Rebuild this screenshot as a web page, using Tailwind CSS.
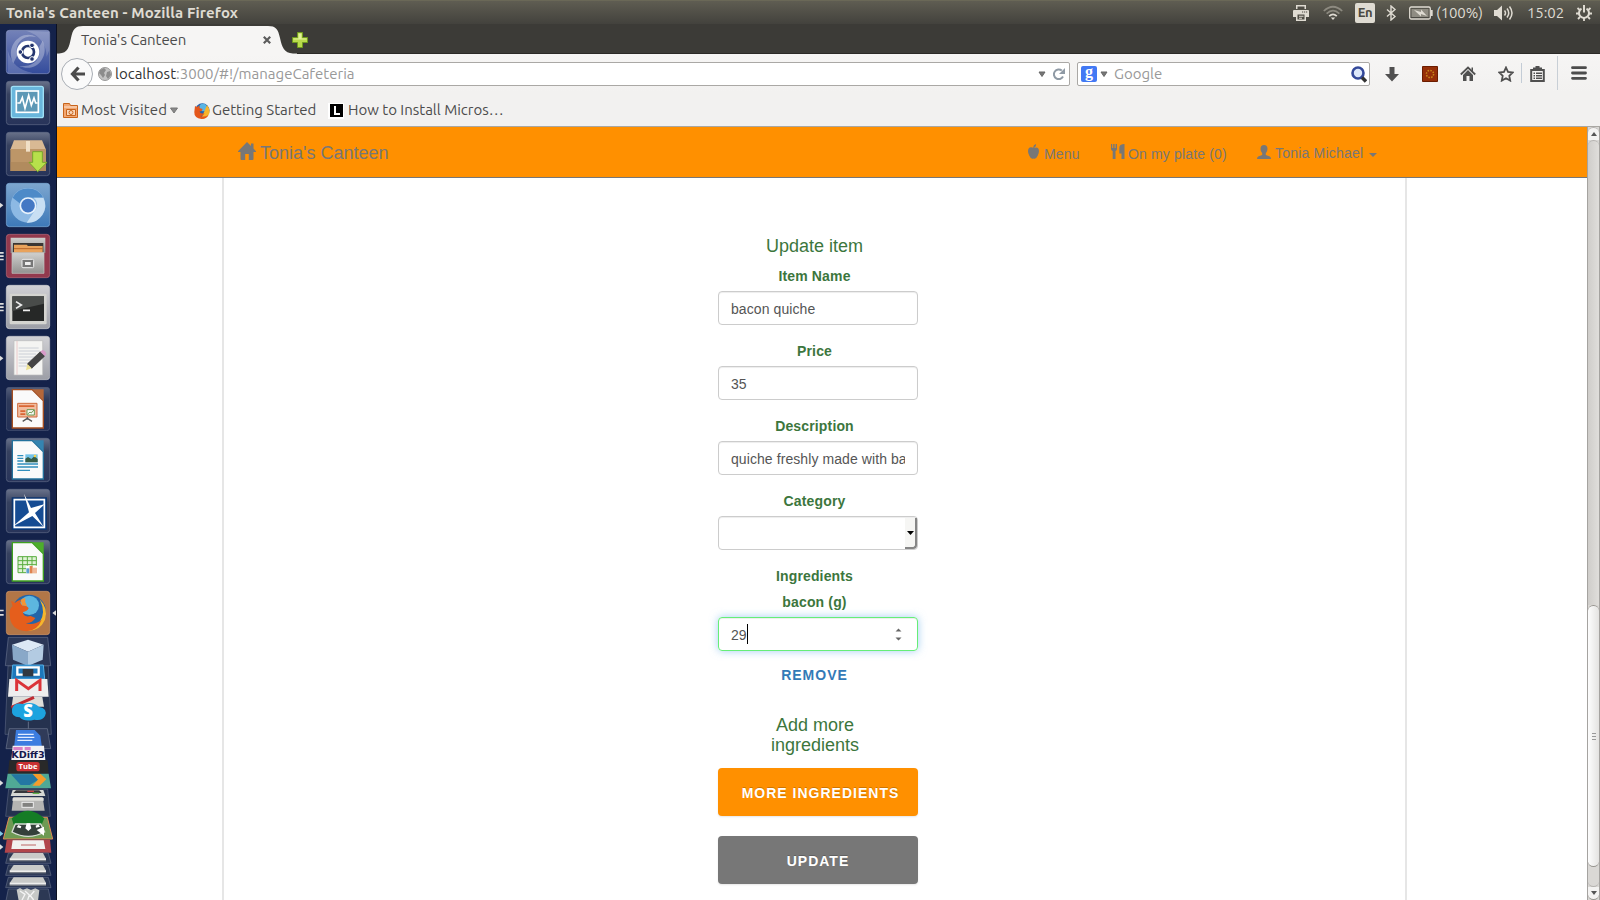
<!DOCTYPE html>
<html lang="en">
<head>
<meta charset="utf-8">
<title>Tonia's Canteen</title>
<script src="https://cdn.jsdelivr.net/npm/@tailwindcss/browser@4"></script>
</head>
<body class="w-[1600px] h-[900px] overflow-hidden flex flex-col bg-white font-['Ubuntu','Open_Sans',sans-serif]">

<!-- System panel -->
<header class="h-6 shrink-0 flex items-center bg-linear-to-b from-[#5f5d52] to-[#43423d] border-t border-[#6a6857] text-[#dfdbd2] text-[15px] leading-none">
  <h1 class="ml-[6px] w-[1287px] font-bold text-[15px] tracking-[0.120px] whitespace-nowrap">Tonia's Canteen - Mozilla Firefox</h1>
  <svg class="w-4 h-4" viewBox="0 0 16 16"><path fill="#dfdbd2" d="M3 0h10v4H3zM1 5h14q1 0 1 1v6h-3v4H3v-4H0V6q0-1 1-1z"/><path fill="#4f4d45" d="M4.500 1.500h7V4h-7zM4.500 9.500h7v5h-7zM9 6.500h1.200v1H9zM11 6.500h1.200v1H11zM13 6.500h1.200v1H13z"/><path fill="#dfdbd2" d="M6 10.800h4.500v1H6zM6 12.800h3v1H6z"/></svg>
  <svg class="ml-[14px] w-5 h-4" viewBox="0 0 20 16" fill="none" stroke-width="1.700"><path stroke="#8d8a80" d="M.8 6Q10-2.500 19.200 6M3.600 8.600Q10 2.600 16.400 8.600"/><path stroke="#dfdbd2" d="M6.200 11.200Q10 7.600 13.800 11.200"/><path fill="#dfdbd2" d="M7.800 12.500h4.400L10 15z"/></svg>
  <span class="ml-3 w-5 h-5 rounded-xs bg-[#dfdbd2] text-[#4a4840] text-[13px] font-semibold flex items-center justify-center tracking-tight">En</span>
  <svg class="ml-[10px] w-3 h-4" viewBox="0 0 12 16" fill="none" stroke="#dfdbd2" stroke-width="1.400"><path d="M2 4.500l8 7L6 15V1l4 3.500-8 7"/></svg>
  <svg class="ml-[12px] w-6 h-[14px]" viewBox="0 0 24 14"><rect x=".7" y="1" width="20.600" height="12" rx="1.500" fill="none" stroke="#dfdbd2" stroke-width="1.300"/><rect x="2.500" y="3" width="17" height="8" fill="#8f8c82"/><path fill="#dfdbd2" d="M22 4h1.700v6H22zM5 4l7 2 0-2.500 6 6.500-6-2v2.500z"/></svg>
  <span class="ml-[3px] w-[48px] tracking-[-0.100px] whitespace-nowrap">(100%)</span>
  <svg class="ml-[10px] w-5 h-4" viewBox="0 0 20 16"><path fill="#dfdbd2" d="M0 5h3l5-4.500v15L3 11H0z"/><path fill="none" stroke="#dfdbd2" stroke-width="1.500" d="M10.500 5.500q2 2.500 0 5M13 3.500q3.500 4.500 0 9M15.500 1.500q5 6.500 0 13"/></svg>
  <span class="ml-[13px] w-[36px] tracking-[-0.100px]">15:02</span>
  <svg class="ml-[13px] w-4 h-4" viewBox="0 0 16 16" fill="none" stroke="#dfdbd2"><path stroke-width="2" d="M5.500 3.600a5 5 0 1 0 5 0M8 0v7.500"/><path stroke-width="1.800" d="M3.700 5L1.500 3M3 8.500H0M4 12l-2 2M8 13v3M12 12l2 2M13 8.500h3M12.300 5l2.200-2"/></svg>
</header>

<div class="flex grow min-h-0">
<!-- Launcher -->
<aside class="w-[57px] shrink-0 bg-[#14224a] border-r border-[#0b1022] flex flex-col">
  <div class="flex flex-col gap-[7px] pt-[6px] pl-[6px] [&>svg]:w-11 [&>svg]:h-11 [&>svg]:shrink-0 [&>svg]:overflow-visible">
    <svg viewBox="0 0 132 132"><defs>
      <linearGradient id="dark" x2="0" y2="1"><stop stop-color="#69728a"/><stop offset=".3" stop-color="#36415f"/><stop offset="1" stop-color="#28345a"/></linearGradient>
      <linearGradient id="grey" x2="0" y2="1"><stop stop-color="#d0d0d4"/><stop offset="1" stop-color="#9c9ea6"/></linearGradient>
      <linearGradient id="blue" x2="0" y2="1"><stop stop-color="#7da6cf"/><stop offset="1" stop-color="#3d79b8"/></linearGradient>
      <linearGradient id="purp" x2="0" y2="1"><stop stop-color="#7482b8"/><stop offset="1" stop-color="#344c9c"/></linearGradient>
      <linearGradient id="cab" x2="0" y2="1"><stop stop-color="#d0d0ce"/><stop offset="1" stop-color="#929290"/></linearGradient></defs>
      <rect x="1" y="1" width="130" height="130" rx="9" fill="url(#purp)" stroke="#8a95c2" stroke-width="2"/>
      <path fill="#fff" opacity=".3" d="M22 100C-5 45 50-5 92 22 55 10 22 40 34 76zM110 32C132 78 92 130 40 108 82 112 108 86 100 50z"/>
      <path fill="#fff" opacity=".18" d="M5 60Q20 120 80 128L50 131H5zM60 2Q120 20 122 80L130 60V5z"/>
      <circle cx="66" cy="66" r="34" fill="#fff"/><circle cx="66" cy="66" r="18" fill="none" stroke="#25366f" stroke-width="8"/>
      <g stroke="#fff" stroke-width="3" fill="#25366f"><circle cx="43" cy="66" r="7"/><circle cx="78" cy="46" r="7"/><circle cx="78" cy="87" r="7"/></g></svg>
    <svg viewBox="0 0 132 132"><rect x="1" y="1" width="130" height="130" rx="9" fill="url(#dark)" stroke="#616b86" stroke-width="2"/><rect x="16" y="16" width="96" height="94" rx="6" fill="#69b6dc" stroke="#9fe0f5" stroke-width="4"/><rect x="31" y="30" width="66" height="64" fill="#5d98b6" stroke="#fff" stroke-width="5"/><path fill="none" stroke="#fff" stroke-width="5" d="M34 66h8l7-16 8 32 11-39 8 30 8-22 5 15h6"/></svg>
    <svg viewBox="0 0 132 132"><rect x="1" y="1" width="130" height="130" rx="9" fill="url(#dark)" stroke="#616b86" stroke-width="2"/><path fill="#d8b994" d="M24 25h84l12 28H13z"/><path fill="#bd9668" d="M13 51h107v66H13z"/><path fill="#a67f54" d="M13 90h107v27H13z" opacity=".5"/><path fill="#f0dfc6" d="M60 27h12v32H60z"/><path fill="#b7e04b" stroke="#78a62b" stroke-width="3" d="M80 59h29v32h14l-28 28-26-28h11z"/></svg>
    <svg viewBox="0 0 132 132"><path fill="#ddd" d="M-18 59l10 8-10 8z"/><rect x="1" y="1" width="130" height="130" rx="9" fill="url(#blue)" stroke="#7faedb" stroke-width="2"/><circle cx="66" cy="67" r="52" fill="#8db9e4"/><path fill="#4d8ac8" d="M20 44a52 52 0 0 1 92 0H66a25 25 0 0 0-25 17z"/><path fill="#c8dff3" d="M112 44a52 52 0 0 1-50 75l28-42a25 25 0 0 0-7-33z"/><circle cx="66" cy="68" r="23" fill="#4478c4" stroke="#e8f2fc" stroke-width="5"/></svg>
    <svg viewBox="0 0 132 132"><path fill="#ddd" d="M-18 54h11v5h-11zM-18 64h11v5h-11zM-18 74h11v5h-11z"/><rect x="1" y="1" width="130" height="130" rx="9" fill="#93394d" stroke="#b76b7a" stroke-width="2"/><path fill="url(#cab)" d="M14 11h104v46H14z"/><path fill="#3b3633" d="M21 27h91v28H21z"/><path fill="#e9a35c" d="M24 32h38l4 4h44v20H24z"/><path stroke="#b8652b" stroke-width="3" d="M24 44h86"/><path fill="url(#cab)" stroke="#c4c4c2" stroke-width="2" d="M18 56h96v62H18z"/><rect x="48" y="76" width="35" height="25" rx="3" fill="#777" stroke="#eee" stroke-width="3"/><path fill="#eee" d="M57 84h17v9H57z"/></svg>
    <svg viewBox="0 0 132 132"><path fill="#ddd" d="M-18 54h11v5h-11zM-18 64h11v5h-11zM-18 74h11v5h-11z"/><rect x="1" y="1" width="130" height="130" rx="9" fill="url(#grey)" stroke="#d5d5d8" stroke-width="2"/><rect x="11" y="26" width="111" height="92" rx="4" fill="#d4d4d0"/><rect x="19" y="34" width="95" height="74" fill="#262827"/><path fill="#494c4a" d="M19 34h95v22L19 78z"/><path fill="none" stroke="#eee" stroke-width="5" d="M30 50l16 10-16 10M51 76h21"/></svg>
    <svg viewBox="0 0 132 132"><path fill="#ddd" d="M-18 59l10 8-10 8z"/><rect x="1" y="1" width="130" height="130" rx="9" fill="url(#grey)" stroke="#c6c6cc" stroke-width="2"/><path fill="#f4f4f2" stroke="#bbb" stroke-width="2" d="M24 14h86v103H24z"/><path stroke="#b9bfc8" stroke-width="2" d="M38 36h60M38 45h63M38 54h52M38 63h60M38 72h45M38 81h32M38 90h25"/><path stroke="#e9b8b8" stroke-width="2" d="M33 15v101"/><path fill="#444" stroke="#252525" stroke-width="2" d="M64 84l39-37 13 13-39 37z"/><path fill="#d79ac8" d="M103 47l6-5q11 2 12 13l-5 5z"/><path fill="#ece091" d="M64 84l13 13-17 6z"/></svg>
    <svg viewBox="0 0 132 132"><rect x="1" y="1" width="130" height="130" rx="9" fill="url(#dark)" opacity=".75" stroke="#616b86" stroke-width="2"/><path fill="#fafafa" stroke="#a54e20" stroke-width="4" d="M19 8h60l33 33v82H19z"/><path fill="#b5673a" d="M79 7h34v34z"/><path fill="#f1bda0" stroke="#cf6b3c" stroke-width="3" d="M35 49h58v41H35z"/><path fill="#d96634" d="M39 55h46v5H39zM43 70h15v5H43zM43 79h15v5H43z"/><path fill="#fff" stroke="#6a9b53" stroke-width="3" d="M63 68h22v16H63zM65 81l7-6 4 3 8-9"/><path fill="none" stroke="#555" stroke-width="4" d="M64 90v8M50 103l14-9 14 9"/></svg>
    <svg viewBox="0 0 132 132"><rect x="1" y="1" width="130" height="130" rx="9" fill="url(#dark)" stroke="#616b86" stroke-width="2"/><path fill="#fafafa" stroke="#23719c" stroke-width="4" d="M19 8h60l33 33v82H19z"/><path fill="#3484b0" d="M79 7h34v34z"/><path stroke="#318fbd" stroke-width="4" d="M34 53h18M34 61h18M34 69h18M34 78h62M34 87h62M34 97h38"/><path fill="#73c2e8" d="M58 49h37v24H58z"/><path fill="#365c46" d="M58 73V62l8-5 10 6 9-8 10 8v10z"/><circle cx="87" cy="54" r="4" fill="#f5d24a"/></svg>
    <svg viewBox="0 0 132 132"><rect x="1" y="1" width="130" height="130" rx="9" fill="url(#dark)" stroke="#616b86" stroke-width="2"/><path fill="#164c93" stroke="#0c356f" stroke-width="4" d="M19 27h102v94H19z"/><path fill="none" stroke="#fff" stroke-width="5" d="M25 32h90v83H25z"/><path fill="#fff" d="M54 14l21 43L117 45 87 72l26 42-34-33-58 31 48-42z"/></svg>
    <svg viewBox="0 0 132 132"><rect x="1" y="1" width="130" height="130" rx="9" fill="url(#dark)" stroke="#616b86" stroke-width="2"/><path fill="#fafafa" stroke="#3fa01f" stroke-width="4" d="M19 8h60l33 33v82H19z"/><path fill="#4dad2b" d="M79 7h34v34z"/><path fill="#dff2d6" stroke="#58ad3e" stroke-width="3" d="M36 50h55v48H36zM36 62h55M36 74h55M36 86h55M50 50v48M64 50v48M78 50v48"/><path fill="#fff" d="M60 77h37v24H60z"/><path fill="#5d9fcf" d="M61 85h9v15h-9z"/><path fill="#df8350" d="M71 78h9v22h-9z"/><path fill="#f0b99a" d="M81 83h12v17H81z"/></svg>
    <svg viewBox="0 0 132 132"><path fill="#ddd" d="M-18 56h11v5h-11zM-18 69h11v5h-11zM150 58v16l-11-8z"/><rect x="1" y="1" width="130" height="130" rx="9" fill="#b27647" stroke="#d39a6b" stroke-width="2"/><circle cx="69" cy="62" r="51" fill="#2465a8"/><circle cx="70" cy="43" r="29" fill="#5db6df"/><path fill="#f6b52c" d="M101 25q27 28 16 61-15 34-53 34l37-26q20-30 0-69z"/><path fill="#e55e1c" d="M15 30q7 1 11 6 10-9 18-10-3 9 4 17 15 0 20 9-5 10-17 11 1 17 23 12l14 6q-10 17-29 15 22 9 48-9-13 32-45 34Q13 118 11 72q-1-21 9-26z"/><path fill="#f49534" d="M44 26q8-4 14-4-3 11 5 22-7 1-15-1z"/></svg>
  </div>
  <svg class="w-[57px] h-[264px] shrink-0 mt-px" viewBox="0 18 171 792">
    <path fill="#2b3757" stroke="#65708c" stroke-width="2" d="M25 22h118l9 85H16z"/>
    <path fill="#dce8f5" d="M84 29l47 15-47 21-48-21z"/><path fill="#89a8c8" d="M36 44l48 21v43L39 89z"/><path fill="#b3cbe2" d="M131 44L84 65v43l44-19z"/>
    <path fill="#25324f" stroke="#56617d" stroke-width="2" d="M24 108h121l9 205H15z"/>
    <path fill="#1e78bb" stroke="#54afe6" stroke-width="3" d="M38 105h92l4 42H35z"/><path fill="none" stroke="#fff" stroke-width="7" d="M52 112h64v22H52z"/><path fill="#303842" d="M68 117h32v22H68z"/>
    <path fill="#eee" d="M28 147h114l4 53H24z"/><path fill="none" stroke="#db3439" stroke-width="9" d="M50 183v-32l35 25 35-25v32"/>
    <path fill="#deded9" d="M39 201h88l5 29H35z"/><path stroke="#bf2b31" stroke-width="9" d="M34 232l68-30"/>
    <path fill="#1da3df" d="M36 237q6-22 33-15 31-9 48 9 27 4 18 27-9 16-32 11-30 8-44-7-26 0-23-25z"/><text x="84" y="262" text-anchor="middle" font-family="Open Sans" font-weight="800" font-size="50" fill="#fff">S</text>
    <path stroke="#828da4" stroke-width="2" d="M85 275v30"/>
    <path fill="#303b59" stroke="#6e7890" stroke-width="2" d="M28 296h114l10 60H18z"/>
    <path fill="#3c7de0" d="M48 300h56l17 17 5 36H42z"/><path stroke="#e2edff" stroke-width="4" d="M54 313h47M53 322h50M52 331h45"/>
    <path fill="#f2f2f3" d="M38 347h94l4 43H34z"/><path fill="#d982c6" d="M40 351h28v10H40zM74 351h18v10H74z"/><text x="84" y="384" text-anchor="middle" font-family="DejaVu Sans" font-weight="bold" font-size="25" textLength="100" lengthAdjust="spacingAndGlyphs" fill="#15174d">KDiff3</text>
    <path fill="#292929" d="M28 391h115l3 40H24z"/><rect x="49" y="396" width="70" height="28" rx="8" fill="#c83033"/><text x="84" y="417" text-anchor="middle" font-family="Open Sans" font-weight="bold" font-size="23" fill="#fff">Tube</text>
    <path fill="#50a995" d="M23 431h123l7 44H16z"/><path fill="#2377a3" d="M33 433h72l10 16-26 16H62z"/><path fill="#f59c2b" d="M98 432h24l17 16-20 19H97l17-18z"/><path fill="#ddd" d="M0 451l10 8-10 8z"/>
    <path fill="#25324f" stroke="#56617d" stroke-width="2" d="M26 477h117l8 82H17z"/>
    <path fill="#d6d8d4" d="M38 480h92l6 18H32z"/><path fill="#35373b" d="M48 481h70l7 8H40z"/><path stroke="#c94141" stroke-width="4" d="M82 484h20"/><path stroke="#65b14b" stroke-width="4" d="M98 490h20"/>
    <path fill="#b4b4b2" d="M40 501h88l6 41H35z"/><path fill="#deded9" d="M38 504h93v8H37z"/><rect x="66" y="517" width="34" height="15" fill="#828280" stroke="#eee" stroke-width="3"/>
    <path fill="#6e9a54" stroke="#df8a54" stroke-width="3" d="M27 562h115l16 65H10z"/><path fill="#157c25" d="M35 565l13-9q35-27 73 0l12 9-8 19H41z"/><path fill="#34403a" stroke="#d5ddd3" stroke-width="4" d="M46 582h76l12 24q-50 26-98 0z"/><path fill="#fff" d="M80 580h10l4 15-9 8-9-8zM55 585l9 4-2 6-12-3zM107 587l8-4 5 7-12 3zM110 600l22-10v27z"/><path fill="#81c9e5" d="M0 603l10 8-10 8z"/>
    <path fill="#b1454b" d="M20 629h130l4 39H14z"/><path fill="#f1f1ef" d="M38 631h93l5 26H34z"/><path stroke="#bd6664" stroke-width="3" d="M63 645h45"/><path fill="#ddd" d="M0 643l10 8-10 8z"/>
    <g id="drive"><path fill="#2c3854" stroke="#626d86" stroke-width="2" d="M25 669h120l8 31H17z"/><path fill="#c9cac8" d="M41 669h88l9 17H29z"/><path fill="#efefed" d="M29 685h109v6H29z"/><path fill="#85878b" d="M29 691h109v3H29z"/></g>
    <use href="#drive" y="36"/><use href="#drive" y="73"/>
    <path fill="#2c3854" stroke="#626d86" stroke-width="2" d="M25 777h120l8 40H17z"/><path fill="#c6c8c6" d="M50 779l10-5 9 5 12-4 12 5 13-5 12 6-4 31H56z"/><path stroke="#f4f4f4" stroke-width="4" fill="none" d="M60 783l15 10-9 17M75 783l13 12-5 15M103 783l-12 14 10 13"/>
  </svg>
</aside>

<div class="flex flex-col grow min-w-0">
  <!-- Tab strip -->
  <div class="h-[30px] shrink-0 bg-[#3c3b37] border-b border-[#2b2a27] relative">
    <svg class="absolute left-0 top-0 w-[240px] h-[31px]" viewBox="0 0 240 31"><path fill="#f6f5f4" d="M0 31V29.500H2C11 29 12 23 14 14 16 5 18 2 26 2H211C219 2 221 5 223 14 225 23 227 29 236 29.500H240V31z"/></svg>
    <div class="relative flex items-center h-full text-[15px] text-[#4c4c4c]">
      <span class="ml-6 w-[180px] tracking-[-0.050px] whitespace-nowrap pt-[3px]">Tonia's Canteen</span>
      <svg class="w-2 h-2 mt-[3px] ml-[2px]" viewBox="0 0 8 8" stroke="#5c5c5c" stroke-width="2.200"><path d="M.8.8l6.400 6.400M7.200.8L.8 7.200"/></svg>
      <svg class="ml-[21px] w-4 h-4 mt-[2px]" viewBox="0 0 16 16"><path fill="#b9d94c" stroke="#6f9a1d" d="M5.500.5h5v5h5v5h-5v5h-5v-5h-5v-5h5z"/><path fill="#e2f29a" d="M6.500 1.500h3v5h5v1h-13v-1h5z"/></svg>
    </div>
  </div>
  <!-- Address and search -->
  <div class="h-[38px] shrink-0 bg-linear-to-b from-[#f6f5f4] to-[#f2f1f0] flex items-center text-[15px] text-[#999]">
    <div class="relative z-10 ml-1 mt-[2px] w-8 h-8 rounded-full border border-[#a9aeb5] bg-[#fafafa] flex items-center justify-center shrink-0"><svg class="w-[15px] h-4" viewBox="0 0 15 16"><path fill="none" stroke="#4c4c4c" stroke-width="3.200" d="M8.500 1.500L2.500 8l6 6.500M3 8h12"/></svg></div>
    <div class="-ml-[9px] mt-[2px] w-[986px] h-6 shrink-0 bg-white border border-[#aaa8a5] rounded-r-xs flex items-center pl-[13px] whitespace-nowrap">
      <svg class="w-[14px] h-[14px]" viewBox="0 0 14 14"><circle cx="7" cy="7" r="6.500" fill="#c4c4c4" stroke="#999"/><path fill="#8c8c8c" d="M2 3l4-2 2 2-2 3 1 2-2 3-2-3-2-2zM9 5l3-1 1 4-3 4-2-3z"/></svg>
      <span class="ml-[3px] w-[926px] pt-px"><span class="text-[#333]">localhost</span>:3000/#!/manageCafeteria</span>
    </div>
    <svg class="-ml-[32px] mt-[3px] w-2 h-[7px] shrink-0" viewBox="0 0 8 7"><path fill="#777" stroke="#666" d="M1 1h6L4 5.500z"/></svg>
    <svg class="ml-[7px] mt-[2px] w-3 h-[14px] shrink-0" viewBox="0 0 12 14"><path fill="none" stroke="#8f9aa5" stroke-width="2" d="M10 9.500A4.800 4.800 0 1 1 8.800 3.600"/><path fill="#8f9aa5" d="M12 1v6H6z"/></svg>
    <div class="ml-[12px] mt-[2px] w-[293px] h-6 shrink-0 bg-white border border-[#aaa8a5] rounded-xs flex items-center">
      <span class="ml-[3px] w-4 h-4 rounded-xs bg-[#4279f4] text-white flex items-center justify-center font-['Liberation_Serif'] font-bold text-[16px] leading-none pb-1">g</span>
      <svg class="ml-[3px] w-2 h-[7px]" viewBox="0 0 8 7"><path fill="#777" stroke="#666" d="M1 1h6L4 5.500z"/></svg>
      <span class="ml-[6px] w-[237px] pt-px">Google</span>
      <svg class="w-4 h-[17px]" viewBox="0 0 16 17"><circle cx="7" cy="7" r="5.500" fill="#dce7fa" stroke="#34499a" stroke-width="2.600"/><path stroke="#333" stroke-width="3.600" d="M11 11.500l4 4"/></svg>
    </div>
    <svg class="ml-[15px] mt-[2px] w-[14px] h-[15px] shrink-0" viewBox="0 0 14 15"><path fill="#505050" d="M4.500 0h5v7H14l-7 7.500L0 7h4.500z"/></svg>
    <svg class="ml-[23px] mt-[2px] w-4 h-4 shrink-0" viewBox="0 0 16 16"><path fill="#962f08" stroke="#6b1c00" d="M.5.5h15v15H.5z"/><circle cx="8" cy="8" r="3.600" fill="none" stroke="#c8851a" stroke-width="1.500" stroke-dasharray="1.600 1.200"/></svg>
    <svg class="ml-[22px] mt-[2px] w-4 h-4 shrink-0" viewBox="0 0 16 16"><path fill="none" stroke="#505050" stroke-width="1.800" d="M.8 8.500L8 1.500l7.200 7"/><path fill="#505050" d="M3 9l5-5 5 5v6H9.500v-5h-3v5H3zM11.500 1.500H13V6l-1.500-1.500z"/></svg>
    <svg class="ml-[22px] mt-[2px] w-4 h-4 shrink-0" viewBox="0 0 16 16"><path fill="none" stroke="#505050" stroke-width="1.800" d="M8 1.500l2 4.400 4.800.6-3.500 3.300.9 4.800L8 12.200l-4.200 2.400.9-4.800L1.200 6.500 6 5.900z"/></svg>
    <span class="ml-[7px] h-5 w-px bg-[#c3ccd6]"></span>
    <svg class="ml-[8px] mt-[1px] w-[15px] h-4 shrink-0" viewBox="0 0 15 16"><path fill="none" stroke="#505050" stroke-width="2" d="M1.200 4h12.600v11H1.200z"/><path fill="#505050" d="M3 1.500h2.500V0h4v1.500H12V5H3zM3.500 6.500H5V8H3.500zM6 6.500h6V8H6zM3.500 9H5v1.500H3.500zM6 9h6v1.500H6zM3.500 11.500H5V13H3.500zM6 11.500h6V13H6z"/></svg>
    <span class="ml-[12px] h-[34px] w-px bg-[#c8cfd6]"></span>
    <svg class="ml-[13px] w-4 h-[14px] shrink-0" viewBox="0 0 16 14"><path stroke="#4c4c4c" stroke-width="2.800" stroke-linecap="round" d="M1.500 1.700h13M1.500 7h13M1.500 12.300h13"/></svg>
  </div>
  <!-- Bookmarks -->
  <div class="h-[35px] shrink-0 bg-[#f2f1f0] border-b border-[#a9a7a3] flex items-center pt-[3px] text-[15px] text-[#4c4c4c] whitespace-nowrap">
    <svg class="ml-[6px] w-[15px] h-[15px]" viewBox="0 0 15 15"><path fill="#f2a772" stroke="#c8641c" d="M.5.5h6l1 2h7v12H.5z"/><path fill="#fff" opacity=".7" d="M1 3.500h13v1H1z"/><path fill="#f9d7bc" stroke="#c8641c" d="M3.500 6.500h9v6h-9z"/><circle cx="8" cy="9.500" r="2" fill="none" stroke="#c8641c"/></svg>
    <span class="ml-[3px] w-[87px] tracking-[0.150px]">Most Visited</span>
    <svg class="ml-[2px] w-2 h-[7px]" viewBox="0 0 8 7"><path fill="#888" stroke="#777" d="M.5 1h7L4 6z"/></svg>
    <svg class="ml-[16px] w-4 h-4" viewBox="0 0 16 16"><circle cx="8.300" cy="7.500" r="7.200" fill="#2463ad"/><circle cx="9" cy="4.500" r="3.700" fill="#58b5e5"/><path fill="#f7b42c" d="M13 2q4 5 2 9-2 5-8 5z"/><path fill="#e4571b" d="M1 3l2 1 2.500-1.500V5l3 1q0 2-3 2.500 1 3 5 1.500-1 3-4 3 4 1.500 8-1-2 4-7 4Q0 15 .3 9z"/></svg>
    <span class="ml-[2px] w-[104px]">Getting Started</span>
    <span class="ml-[12px] w-4 h-4 bg-white flex items-center justify-center"><svg class="w-[13px] h-[13px]" viewBox="0 0 13 13"><path fill="#000" d="M0 0h13v13H0z"/><path fill="none" stroke="#fff" stroke-width="2" d="M5 2v8h5"/></svg></span>
    <span class="ml-[4px]">How to Install Micros…</span>
  </div>

  <!-- Page viewport -->
  <div class="flex grow min-h-0 font-['Liberation_Sans',sans-serif]">
    <main class="w-[1530px] shrink-0 flex flex-col">
      <nav class="h-[51px] shrink-0 bg-[#ff9000] border-b border-[#777] flex items-center text-[#777] text-[14px] whitespace-nowrap">
        <svg class="ml-[181px] -mt-[2px] w-[18px] h-[18px]" viewBox="0 0 18 18"><path fill="#777" d="M9 0l4 4V1.500h2.500v5L18 9.300q.2.700-.5.700h-2v7q0 1-1 1h-3.700v-6H7.200v6H3.500q-1 0-1-1v-7h-2Q-.2 10 0 9.300z"/></svg>
        <span class="ml-1 w-[768px] text-[18px] pt-[3px]">Tonia's Canteen</span>
        <svg class="w-[11px] h-[15px] -mt-[2px]" viewBox="0 0 11 15"><path fill="#777" d="M5.300 3.800Q5 1 8 0q.5 2.500-2 4 3-1.500 4.500.8 1.200 3-.8 7Q8 15.600 5.500 14.500 3 15.600 1.300 11.800-.8 7.800.5 4.800 2 2.500 5.300 3.800z"/></svg>
        <span class="ml-[5px] w-[36px] pt-[5px] tracking-[0.150px]">Menu</span>
        <svg class="ml-[31px] w-[14px] h-[15px] -mt-[2px]" viewBox="0 0 14 15"><path fill="#777" d="M0 0h1.200v4h1V0h1.400v4h1V0H6v5q0 1.500-1.500 2v8H1.700V7Q0 6.500 0 5zM9.500 1Q11 0 13.500 0v15h-3V9.500H8.300V4q0-2 1.200-3z"/></svg>
        <span class="ml-[3px] w-[98px] pt-[5px] tracking-[0.150px]">On my plate (0)</span>
        <svg class="ml-[31px] w-[14px] h-[14px] -mt-[1px]" viewBox="0 0 14 14"><path fill="#777" d="M7 0q3.500 0 3.500 4 0 2.500-1.700 4.300V10l4 1.500Q14 12 14 14H0q0-2 1.200-2.500l4-1.500V8.300Q3.500 6.500 3.500 4 3.500 0 7 0z"/></svg>
        <span class="ml-[4px] w-[90px] pt-[3px] tracking-[0.200px]">Tonia Michael</span>
        <svg class="ml-[4px] mt-[6px] w-2 h-1" viewBox="0 0 8 4"><path fill="#777" d="M0 0h8L4 4z"/></svg>
      </nav>
      <section class="ml-[165px] w-[1185px] grow min-h-0 border-x-2 border-[#e6e6e6] flex justify-center">
        <form class="w-[200px] pt-[58px] mr-[-7px] flex flex-col text-[14px] text-[#3c763d] [&>label]:h-5 [&>label]:leading-5 [&>label]:mb-[5px] [&>label]:font-bold [&>label]:text-center [&>label]:mr-[7px] [&>label]:tracking-[0.150px]">
          <h4 class="h-5 mb-[10px] mr-[7px] text-[18px] leading-5 text-center">Update item</h4>
          <label>Item Name</label>
          <div class="h-[34px] mb-4 border border-[#ccc] rounded-sm shadow-[inset_0_1px_1px_rgba(0,0,0,0.075)] px-3 leading-[34px] tracking-[0.080px] text-[#555]">bacon quiche</div>
          <label>Price</label>
          <div class="h-[34px] mb-4 border border-[#ccc] rounded-sm shadow-[inset_0_1px_1px_rgba(0,0,0,0.075)] px-3 leading-[34px] tracking-[0.080px] text-[#555]">35</div>
          <label>Description</label>
          <div class="h-[34px] mb-4 border border-[#ccc] rounded-sm shadow-[inset_0_1px_1px_rgba(0,0,0,0.075)] px-3 leading-[34px] tracking-[0.080px] text-[#555]"><div class="overflow-hidden h-8 whitespace-nowrap">quiche freshly made with bacon</div></div>
          <label>Category</label>
          <div class="h-[34px] mb-4 border border-[#ccc] rounded-sm shadow-[inset_0_1px_1px_rgba(0,0,0,0.075)] flex justify-end"><span class="mt-px w-3 h-[31px] bg-[#f6f6f4] border-r-2 border-b-2 border-[#868686] rounded-br-sm flex items-center justify-center"><svg class="w-[7px] h-1" viewBox="0 0 7 4"><path d="M0 0h7L3.500 4z"/></svg></span></div>
          <label>Ingredients</label>
          <label class="mt-px">bacon (g)</label>
          <div class="h-[34px] border border-[#66ee77] rounded-sm shadow-[inset_0_1px_1px_rgba(0,0,0,0.075),0_0_8px_rgba(102,175,233,0.6)] pl-3 pr-[15px] flex items-center justify-between text-[#555]"><span class="flex items-center"><span class="pt-[2px]">29</span><i class="w-px h-5 bg-black"></i></span><svg class="w-[7px] h-[13px]" viewBox="0 0 7 13"><path fill="#666" d="M.5 3.500L3.500.5l3 3zM.5 9.500h6l-3 3z"/></svg></div>
          <a class="mt-[14px] mr-[7px] h-5 leading-5 text-center font-bold tracking-[1px] text-[#337ab7]">REMOVE</a>
          <h4 class="mt-[30px] mr-[6px] mb-[13px] text-[18px] leading-5 text-center">Add more<br>ingredients</h4>
          <button type="button" class="h-12 shrink-0 rounded-sm bg-[#ff9000] text-white font-bold tracking-[1px] pl-[5px] pt-[2px] whitespace-nowrap [text-shadow:0_-1px_0_rgba(0,0,0,0.2)] shadow-[0_1px_2px_rgba(0,0,0,0.1)]">MORE INGREDIENTS</button>
          <button type="button" class="mt-5 h-12 shrink-0 rounded-sm bg-[#777] text-white font-bold tracking-[1px] pt-[2px] [text-shadow:0_-1px_0_rgba(0,0,0,0.2)] shadow-[0_1px_2px_rgba(0,0,0,0.1)]">UPDATE</button>
        </form>
      </section>
    </main>
    <!-- Scrollbar -->
    <div class="grow flex flex-col bg-[#dad8d5] border-x border-[#a5a3a0]">
      <div class="h-[13px] bg-[#f4f3f2] rounded-t-md border-t border-[#b5b3b0] flex items-center justify-center"><svg class="w-[6px] h-1" viewBox="0 0 6 4"><path fill="#555" d="M0 4h6L3 0z"/></svg></div>
      <div class="h-[465px] border-t border-[#b5b3b0] rounded-t-md bg-linear-to-r from-[#cfcdca] to-[#e0dedb]"></div>
      <div class="h-[262px] rounded-md border-y border-[#96948f] bg-linear-to-r from-[#fdfdfd] to-[#e4e3e1] flex flex-col items-center justify-center gap-[2px]"><i class="w-1 h-px bg-[#999]"></i><i class="w-1 h-px bg-[#999]"></i><i class="w-1 h-px bg-[#999]"></i></div>
      <div class="h-[20px] border-b border-[#b5b3b0] rounded-b-md"></div>
      <div class="h-[13px] bg-[#f4f3f2] rounded-b-md border-b border-[#96948f] flex items-center justify-center"><svg class="w-[6px] h-1" viewBox="0 0 6 4"><path fill="#555" d="M0 0h6L3 4z"/></svg></div>
    </div>
  </div>
</div>
</div>
</body>
</html>
